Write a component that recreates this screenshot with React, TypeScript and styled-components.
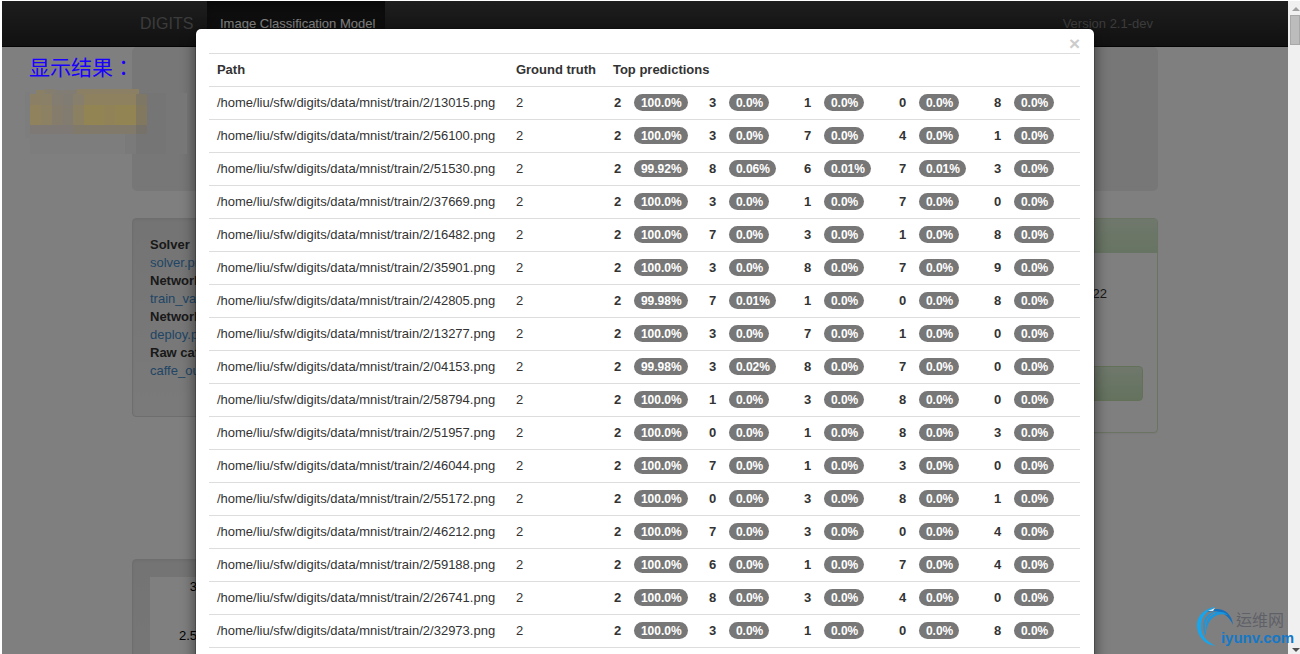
import React from "react";
import styled, { createGlobalStyle } from "styled-components";

const sans = `"Liberation Sans", Arial, sans-serif`;
const cjk = `"Noto Sans CJK TC", "Noto Sans CJK SC", sans-serif`;

const GlobalStyle = createGlobalStyle`
  * { box-sizing: border-box; }
  html, body { margin: 0; height: 100%; background: #fff; }
  body {
    overflow: hidden;
    font-family: ${sans};
    font-size: 13px;
    line-height: 18px;
    color: #333;
  }
`;

const Frame = styled.div`
  display: flex;
  height: 100vh;
  padding: 1px 0 0 2px;
`;

const Viewport = styled.div`
  position: relative;
  flex: 1;
  min-width: 0;
  overflow: hidden;
  background: #fff;
`;

/* ---- page behind the dialog ---- */

const Container = styled.div`
  margin: 0 130px;
`;

const Navbar = styled.nav`
  height: 46px;
  border-bottom: 1px solid #090909;
  background: linear-gradient(#3c3c3c, #222);
`;

const NavRow = styled.div`
  display: flex;
  height: 45px;
  margin: 0 130px;
  padding: 0 5px 0 8px;
  line-height: 46px;
`;

const Brand = styled.a`
  width: 67px;
  font-size: 16px;
  color: #777;
  text-decoration: none;
`;

const NavTab = styled.a`
  padding: 0 10px 0 13px;
  color: #fff;
  text-decoration: none;
  background: linear-gradient(#181818, #222);
  box-shadow: inset 0 3px 9px rgba(0, 0, 0, 0.25);
`;

const Version = styled.span`
  margin-left: auto;
  color: #777;
`;

const Jumbotron = styled.div`
  height: 144px;
  border-radius: 5px;
  background: #eee;
`;

const PanelRow = styled.div`
  display: grid;
  grid-template-columns: 1fr 1fr;
  align-items: start;
  gap: 28px;
  height: 368px;
  padding-top: 27px;
`;

const Well = styled.div`
  min-height: 199px;
  padding: 17px;
  border: 1px solid #dcdcdc;
  border-radius: 4px;
  background: linear-gradient(#e8e8e8, #f5f5f5);
  box-shadow: inset 0 1px 3px rgba(0, 0, 0, 0.05);
`;

const ChartWell = styled(Well)`
  width: 80%;
`;

const FileList = styled.dl`
  margin: 0;
  dt { font-weight: bold; }
  dd { margin: 0; }
  a { color: #428bca; text-decoration: none; }
`;

const StatusPanel = styled.section`
  height: 215px;
  border: 1px solid #d6e9c6;
  border-radius: 4px;
  box-shadow: 0 1px 2px rgba(0, 0, 0, 0.05);
`;

const StatusHeading = styled.header`
  height: 34px;
  background: linear-gradient(#dff0d8, #d0e9c6);
`;

const StatusBody = styled.div`
  padding: 32px 14px;
`;

const StatusTime = styled.div`
  height: 81px;
  padding-right: 36px;
  text-align: right;
`;

const Alert = styled.div`
  height: 35px;
  border: 1px solid #c9e2b3;
  border-radius: 4px;
  background: linear-gradient(#dff0d8, #c8e5bc);
`;

const Chart = styled.div`
  display: flex;
  flex-direction: column;
  gap: 31px;
  height: 200px;
  padding-top: 1px;
  background: #fff;
  color: #000;
`;

const Tick = styled.span`
  width: 47px;
  text-align: right;
`;

/* ---- dialog ---- */

const Backdrop = styled.div`
  position: absolute;
  inset: 0;
  padding: 27px 0 0;
  background: rgba(0, 0, 0, 0.5);
`;

const Dialog = styled.div`
  width: 70%;
  min-width: 900px;
  height: 900px;
  margin: 0 auto;
  padding: 0 14px 0 13px;
  border: 1px solid rgba(0, 0, 0, 0.2);
  border-radius: 6px;
  background: #fff;
  background-clip: padding-box;
  box-shadow: 0 5px 14px rgba(0, 0, 0, 0.5);
`;

const DialogHeader = styled.div`
  display: flex;
  justify-content: flex-end;
  height: 24px;
`;

const CloseButton = styled.button`
  height: 24px;
  padding: 5px 0 0;
  border: 0;
  background: none;
  font: bold 19px/18px ${sans};
  color: #ccc;
`;

const ResultTable = styled.table`
  width: 100%;
  table-layout: fixed;
  border-collapse: separate;
  border-spacing: 0;
  th, td {
    height: 33px;
    padding: 7px 8px;
    border-top: 1px solid #ddd;
    text-align: left;
    white-space: nowrap;
  }
`;

const PathColumn = styled.col`
  width: 299px;
`;

const TruthColumn = styled.col`
  width: 97px;
`;

const Predictions = styled.div`
  display: grid;
  grid-template-columns: repeat(4, 95px) auto;
  padding-left: 1px;
`;

const Prediction = styled.div`
  display: flex;
  font-weight: bold;
`;

const Digit = styled.span`
  width: 20px;
`;

const Badge = styled.span`
  height: 17px;
  padding: 0 6px 0 7px;
  border-radius: 9px;
  background: #777;
  color: #fff;
  font-size: 12px;
  line-height: 18px;
`;

/* ---- annotations over the page ---- */

const Caption = styled.div`
  position: absolute;
  left: 27px;
  top: 53px;
  font: 21px/24px ${cjk};
  color: #1a00ff;
`;

const Mosaic = styled.svg`
  position: absolute;
  left: 18px;
  top: 83px;
`;

const Watermark = styled.div`
  position: absolute;
  right: 6px;
  bottom: 6px;
  width: 97px;
  height: 42px;
`;

const WatermarkRing = styled.svg`
  position: absolute;
  left: 0;
  top: 0;
`;

const WatermarkName = styled.div`
  position: absolute;
  right: 10px;
  top: 3px;
  font: 16px/20px ${cjk};
  color: #5f6168;
`;

const WatermarkSite = styled.div`
  position: absolute;
  right: 0;
  bottom: 0;
  font: bold 15px/20px ${sans};
  color: #1478c8;
`;

const Scrollbar = styled.div`
  display: flex;
  flex-direction: column;
  justify-content: space-between;
  width: 12px;
  background: #f0f0f0;
`;

const Thumb = styled.div`
  height: 30px;
  margin: 3px 0 auto 2px;
  border: 1px solid #a8a8a8;
  background: #bcbcbc;
`;

const rows: [string, string][] = [
  ["13015", "2:100.0 3:0.0 1:0.0 0:0.0 8:0.0"],
  ["56100", "2:100.0 3:0.0 7:0.0 4:0.0 1:0.0"],
  ["51530", "2:99.92 8:0.06 6:0.01 7:0.01 3:0.0"],
  ["37669", "2:100.0 3:0.0 1:0.0 7:0.0 0:0.0"],
  ["16482", "2:100.0 7:0.0 3:0.0 1:0.0 8:0.0"],
  ["35901", "2:100.0 3:0.0 8:0.0 7:0.0 9:0.0"],
  ["42805", "2:99.98 7:0.01 1:0.0 0:0.0 8:0.0"],
  ["13277", "2:100.0 3:0.0 7:0.0 1:0.0 0:0.0"],
  ["04153", "2:99.98 3:0.02 8:0.0 7:0.0 0:0.0"],
  ["58794", "2:100.0 1:0.0 3:0.0 8:0.0 0:0.0"],
  ["51957", "2:100.0 0:0.0 1:0.0 8:0.0 3:0.0"],
  ["46044", "2:100.0 7:0.0 1:0.0 3:0.0 0:0.0"],
  ["55172", "2:100.0 0:0.0 3:0.0 8:0.0 1:0.0"],
  ["46212", "2:100.0 7:0.0 3:0.0 0:0.0 4:0.0"],
  ["59188", "2:100.0 6:0.0 1:0.0 7:0.0 4:0.0"],
  ["26741", "2:100.0 8:0.0 3:0.0 4:0.0 0:0.0"],
  ["32973", "2:100.0 3:0.0 1:0.0 0:0.0 8:0.0"],
];

const files = [
  ["Solver", "solver.prototxt"],
  ["Network (train/val)", "train_val.prototxt"],
  ["Network (deploy)", "deploy.prototxt"],
  ["Raw caffe output", "caffe_output.log"],
];

/* x, y, width, height, fill of each block of the pixelated patch */
const blocks: [number, number, number, number, string][] = [
  [5, 8, 5, 46, "#7d7d7d"],
  [10, 50, 95, 20, "#7d7d7d"],
  [105, 50, 11, 20, "#7a7a7a"],
  [116, 9, 30, 61, "#757575"],
  [146, 9, 21, 61, "#777777"],
  [16, 6, 9, 4, "#8a8066"],
  [25, 5, 10, 5, "#857d6e"],
  [35, 6, 22, 4, "#817d74"],
  [57, 5, 62, 5, "#8b8064"],
  [10, 10, 11, 11, "#8b8066"],
  [21, 10, 11, 11, "#8a8068"],
  [32, 10, 11, 11, "#837c70"],
  [43, 10, 10, 11, "#817c73"],
  [53, 10, 11, 11, "#877e6b"],
  [64, 10, 52, 11, "#8d815f"],
  [116, 10, 11, 11, "#7f7766"],
  [10, 21, 11, 20, "#8f825d"],
  [21, 21, 11, 20, "#8c8163"],
  [32, 21, 11, 20, "#857c6c"],
  [43, 21, 10, 20, "#827b70"],
  [53, 21, 11, 20, "#8b8062"],
  [64, 21, 20, 20, "#938454"],
  [84, 21, 11, 20, "#918257"],
  [95, 21, 21, 20, "#938454"],
  [116, 21, 11, 20, "#827860"],
  [10, 41, 43, 9, "#7e7974"],
  [53, 41, 63, 9, "#81796a"],
  [116, 41, 11, 9, "#777269"],
];

export default function App() {
  return (
    <Frame>
      <GlobalStyle />
      <Viewport>
        <Navbar>
          <NavRow>
            <Brand href="#">DIGITS</Brand>
            <NavTab href="#">Image Classification Model</NavTab>
            <Version>Version 2.1-dev</Version>
          </NavRow>
        </Navbar>
        <Container>
          <Jumbotron />
          <PanelRow>
            <Well>
              <FileList>
                {files.map(([label, file]) => (
                  <React.Fragment key={file}>
                    <dt>{label}</dt>
                    <dd><a href="#">{file}</a></dd>
                  </React.Fragment>
                ))}
              </FileList>
            </Well>
            <StatusPanel>
              <StatusHeading />
              <StatusBody>
                <StatusTime>22</StatusTime>
                <Alert />
              </StatusBody>
            </StatusPanel>
          </PanelRow>
          <ChartWell>
            <Chart>
              <Tick>3</Tick>
              <Tick>2.5</Tick>
            </Chart>
          </ChartWell>
        </Container>

        <Backdrop>
          <Dialog role="dialog" aria-label="Classification results">
            <DialogHeader>
              <CloseButton type="button" aria-label="Close">×</CloseButton>
            </DialogHeader>
            <ResultTable>
              <colgroup>
                <PathColumn />
                <TruthColumn />
                <col />
              </colgroup>
              <thead>
                <tr>
                  <th>Path</th>
                  <th>Ground truth</th>
                  <th>Top predictions</th>
                </tr>
              </thead>
              <tbody>
                {rows.map(([image, results]) => (
                  <tr key={image}>
                    <td>/home/liu/sfw/digits/data/mnist/train/2/{image}.png</td>
                    <td>2</td>
                    <td>
                      <Predictions>
                        {results.split(" ").map((result) => {
                          const [digit, score] = result.split(":");
                          return (
                            <Prediction key={digit}>
                              <Digit>{digit}</Digit>
                              <Badge>{score}%</Badge>
                            </Prediction>
                          );
                        })}
                      </Predictions>
                    </td>
                  </tr>
                ))}
                <tr><td colSpan={3} /></tr>
              </tbody>
            </ResultTable>
          </Dialog>
        </Backdrop>

        <Caption>显示结果：</Caption>
        <Mosaic width="170" height="74" aria-hidden="true">
          {blocks.map(([x, y, w, h, fill]) => (
            <rect key={`${x}-${y}`} x={x} y={y} width={w} height={h} fill={fill} />
          ))}
        </Mosaic>
      </Viewport>
      <Scrollbar aria-hidden="true">
        <svg width="12" height="11"><path d="M4 10h8l-4-4z" fill="#a0a0a0" /></svg>
        <Thumb />
        <svg width="12" height="8"><path d="M4 2h8l-4 4z" fill="#505050" /></svg>
      </Scrollbar>
      <Watermark>
        <WatermarkRing width="40" height="42" viewBox="0 0 40 42">
          <path d="M19 1C7 2-1 11 0 21c1 11 9 18 19 19C10 36 4 30 4 20 4 11 9 5 19 1z" fill="#16a6ee" />
          <path d="M10 6C20-1 35 4 36 19 32 9 22 3 10 6z" fill="#1470bc" />
          <path d="M9 30C3 20 7 8 17 6c6-1 11 0 14 3C20 6 9 12 9 30z" fill="#1a96de" />
          <path d="M10 28C6 18 10 10 18 7" fill="none" stroke="#808080" />
          <path d="M11 5l7-3-2 3z" fill="#d8f0fc" />
        </WatermarkRing>
        <WatermarkName>运维网</WatermarkName>
        <WatermarkSite>iyunv.com</WatermarkSite>
      </Watermark>
    </Frame>
  );
}
